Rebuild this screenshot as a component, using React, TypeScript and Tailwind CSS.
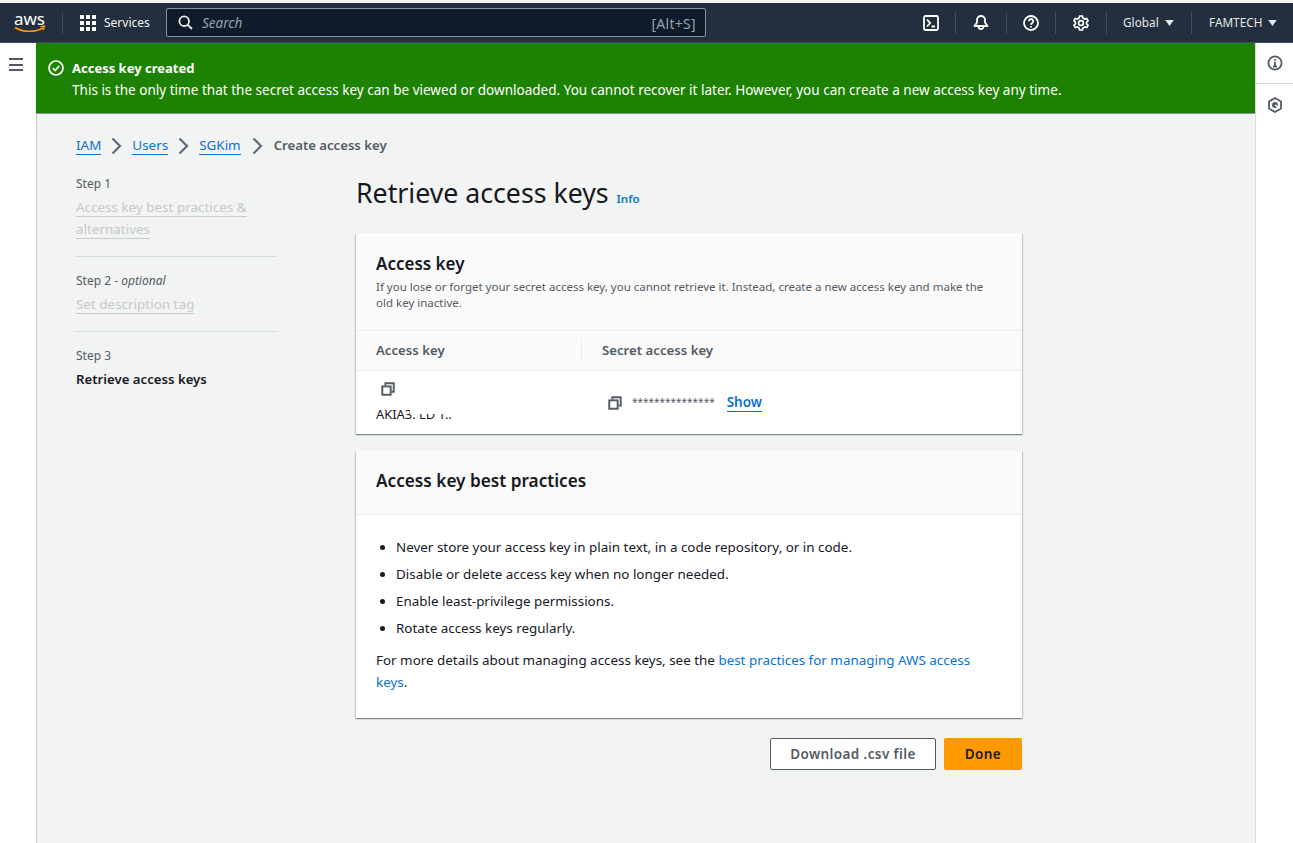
import React from "react";

const F = "font-['Noto_Sans','Open_Sans',sans-serif]";

function Copy() {
  return (
    <svg width="16" height="16" viewBox="0 0 16 16" fill="none" stroke="#545b64" strokeWidth="2.2">
      <rect x="1.5" y="5" width="9.5" height="9.5" />
      <path d="M5 4V1.5h9.5V11H12" />
    </svg>
  );
}

function Caret() {
  return (
    <svg width="9" height="6" viewBox="0 0 10 7" fill="#e5e7eb">
      <path d="M0 0h10L5 7z" />
    </svg>
  );
}

function Sep() {
  return <div className="w-px h-[22px] bg-[#414d5c]" />;
}

function Chevron() {
  return (
    <svg width="11" height="18" viewBox="0 0 11 18" fill="none" stroke="#5f6b7a" strokeWidth="2.2">
      <path d="M1.5 1.5L9 9l-7.5 7.5" />
    </svg>
  );
}

function Crumb({ children }: { children: React.ReactNode }) {
  return <span className="text-[#0972d3] border-b border-[#0972d3] leading-[17px]">{children}</span>;
}

export default function App() {
  return (
    <div className={`${F} w-[1293px] h-[843px] overflow-hidden bg-white flex flex-col text-[14px] text-[#16191f]`}>
      <div className="h-[3px] bg-[#f4f4f4]" />
      <header className="h-[40px] bg-[#232f3e] border-b border-[#414d5c] flex items-center text-white shrink-0">
        <div className="w-[62px] pl-[14px] flex items-center">
          <svg width="33" height="22" viewBox="0 0 33 22">
            <text x="0" y="12.5" fill="#fff" fontSize="17" fontFamily="Noto Sans, sans-serif" textLength="31">aws</text>
            <path d="M1 15.5c8 5 20 5 28 .5" fill="none" stroke="#ff9900" strokeWidth="1.6" />
            <path d="M26.5 14.7l4-.6-1.2 4" fill="none" stroke="#ff9900" strokeWidth="1.4" />
          </svg>
        </div>
        <Sep />
        <div className="flex items-center ml-[17px] w-[86px] gap-[8px]">
          <div className="grid grid-cols-3 gap-[2px] w-[16px]">
            {Array.from({ length: 9 }).map((_, i) => (
              <div key={i} className="w-[4px] h-[4px] bg-white" />
            ))}
          </div>
          <span className="text-[12px] text-[#f2f3f3] pt-px">Services</span>
        </div>
        <div className="w-[540px] h-[29px] bg-[#0f1b2a] border border-[#879596] rounded-[2px] flex items-center pl-[11px] pr-[9px]">
          <svg width="15" height="15" viewBox="0 0 15 15" fill="none" stroke="#e9ebed" strokeWidth="1.8">
            <circle cx="6.2" cy="6.2" r="4.8" />
            <path d="M9.8 9.8l4.2 4.2" />
          </svg>
          <span className="ml-[9px] italic text-[#95a5a6] text-[13.5px] pt-px">Search</span>
          <span className="ml-auto text-[#95a5a6] text-[14px] tracking-[0.3px] pt-px">[Alt+S]</span>
        </div>
        <div className="ml-[217px] w-[16px] flex justify-center">
          <svg width="16" height="16" viewBox="0 0 16 16" fill="none" stroke="#fff" strokeWidth="1.8">
            <rect x="1" y="1" width="14" height="14" rx="1.5" />
            <path d="M4 4.5L7.2 8 4 11.5M8.5 11.5H12" />
          </svg>
        </div>
        <div className="ml-[16px]"><Sep /></div>
        <div className="ml-[17px] w-[16px] flex justify-center">
          <svg width="16" height="17" viewBox="0 0 16 17" fill="none" stroke="#fff" strokeWidth="1.8">
            <path d="M1.5 12h13L12 8.5V6a4 4 0 0 0-8 0v2.5z" strokeLinejoin="round" />
            <path d="M5.5 12.5a2.5 2.5 0 0 0 5 0" />
          </svg>
        </div>
        <div className="ml-[17px]"><Sep /></div>
        <div className="ml-[16px] w-[16px] flex justify-center">
          <svg width="16" height="16" viewBox="0 0 16 16" fill="none" stroke="#fff" strokeWidth="1.8">
            <circle cx="8" cy="8" r="7" />
            <path d="M5.8 6.2a2.2 2.2 0 1 1 3.3 1.9C8.4 8.5 8 9 8 9.8" />
            <path d="M8 11v1.4" />
          </svg>
        </div>
        <div className="ml-[16px]"><Sep /></div>
        <div className="ml-[17px] w-[16px] flex justify-center">
          <svg width="16" height="16" viewBox="0 0 16 16" fill="none" stroke="#fff" strokeWidth="1.7">
            <circle cx="8" cy="8" r="2.4" />
            <path d="M6.6 1h2.8l.5 2 1.8 1 2-.6 1.4 2.4-1.5 1.4v1.6l1.5 1.4-1.4 2.4-2-.6-1.8 1-.5 2H6.6l-.5-2-1.8-1-2 .6L.9 10.2l1.5-1.4V7.2L.9 5.8l1.4-2.4 2 .6 1.8-1z" />
          </svg>
        </div>
        <div className="ml-[17px]"><Sep /></div>
        <div className="ml-[16px] flex items-center gap-[6px] text-[11.8px] text-[#e5e7eb] w-[68px] pt-px">
          Global <Caret />
        </div>
        <Sep />
        <div className="ml-[17px] flex items-center gap-[6px] text-[11.8px] text-[#e5e7eb] pt-px">
          FAMTECH <Caret />
        </div>
      </header>

      <div className="flex flex-1 min-h-0">
        <aside className="w-[36px] bg-white pt-[15px] pl-[9px] shrink-0">
          <div className="flex flex-col gap-[3.5px] w-[14px]">
            <div className="h-[2px] bg-[#545b64]" />
            <div className="h-[2px] bg-[#545b64]" />
            <div className="h-[2px] bg-[#545b64]" />
          </div>
        </aside>

        <main className="flex-1 min-w-0 bg-[#f2f3f3] border-l border-[#c8cccc]">
          <div className="h-[71px] -ml-px bg-[#1d8102] text-white border-b border-[#879596] pl-[12px] pt-[14px] flex gap-[8px]">
            <svg className="mt-[3px] shrink-0" width="16" height="16" viewBox="0 0 16 16" fill="none" stroke="#fff" strokeWidth="1.7">
              <circle cx="8" cy="8" r="7" />
              <path d="M4.8 8.2l2.3 2.3 4.2-4.7" />
            </svg>
            <div className="leading-[22px]">
              <div className="font-bold text-[13px]">Access key created</div>
              <div className="text-[13.54px]">This is the only time that the secret access key can be viewed or downloaded. You cannot recover it later. However, you can create a new access key any time.</div>
            </div>
          </div>

          <div className="pl-[39px] pt-[22px]">
            <nav className="flex items-center text-[13.45px] h-[20px]">
              <Crumb>IAM</Crumb>
              <span className="mx-[10px]"><Chevron /></span>
              <Crumb>Users</Crumb>
              <span className="mx-[10px]"><Chevron /></span>
              <Crumb>SGKim</Crumb>
              <span className="mx-[11px]"><Chevron /></span>
              <span className="font-semibold text-[13.15px] text-[#545b64]">Create access key</span>
            </nav>

            <div className="flex mt-[18px]">
              <div className="w-[200px] shrink-0 text-[13.45px]">
                <div className="text-[12px] text-[#545b64] leading-[20px]">Step 1</div>
                <div className="mt-[2px] leading-[22px] text-[#c6caca]">
                  <span className="border-b border-[#c6caca]">Access key best practices &amp;</span>
                  <br />
                  <span className="border-b border-[#c6caca]">alternatives</span>
                </div>
                <div className="h-px bg-[#d5dbdb] mt-[16px] mb-[14px]" />
                <div className="text-[12px] text-[#545b64] leading-[20px]">
                  Step 2 - <i>optional</i>
                </div>
                <div className="mt-[2px] leading-[22px] text-[#c6caca]">
                  <span className="border-b border-[#c6caca]">Set description tag</span>
                </div>
                <div className="h-px bg-[#d5dbdb] mt-[16px] mb-[14px]" />
                <div className="text-[12px] text-[#545b64] leading-[20px]">Step 3</div>
                <div className="mt-[2px] leading-[22px] text-[13.2px] font-semibold">Retrieve access keys</div>
              </div>

              <div className="ml-[80px] w-[666px] shrink-0">
                <div className="flex items-baseline h-[40px]">
                  <h1 className="text-[26.7px] leading-[38px] text-[#16191f]">Retrieve access keys</h1>
                  <span className="ml-[8px] text-[11.5px] font-semibold text-[#0972d3]">Info</span>
                </div>

                <section className="mt-[19px] bg-white shadow-[0_1px_1px_0_rgba(0,28,36,0.3),1px_1px_1px_0_rgba(0,28,36,0.15),-1px_1px_1px_0_rgba(0,28,36,0.15)]">
                  <div className="h-[98px] bg-[#fafafa] border-b border-[#eaeded] px-[20px] pt-[19px]">
                    <h2 className="text-[17px] font-semibold leading-[24px]">Access key</h2>
                    <p className="text-[11.5px] leading-[16px] text-[#545b64] mt-[3px]">
                      If you lose or forget your secret access key, you cannot retrieve it. Instead, create a new access key and make the
                      <br />
                      old key inactive.
                    </p>
                  </div>
                  <div className="h-[40px] bg-[#fafafa] border-b border-[#eaeded] flex items-center text-[#545b64] font-semibold text-[13.2px]">
                    <div className="w-[226px] pl-[20px] border-r border-[#eaeded] h-[22px] flex items-center">Access key</div>
                    <div className="pl-[20px]">Secret access key</div>
                  </div>
                  <div className="h-[63px] flex">
                    <div className="w-[226px] pl-[20px] pt-[11px]">
                      <div className="pl-[5px]">
                        <span className="block scale-[0.88] origin-top-left"><Copy /></span>
                      </div>
                      <div className="relative mt-[9px] h-[12px] overflow-hidden text-[12.9px] leading-[14px] whitespace-nowrap">
                        AKIA3. LD T..
                        <div className="absolute left-[34px] top-0 w-[50px] h-[7px] bg-white" />
                      </div>
                    </div>
                    <div className="flex items-center pl-[25px]">
                      <span className="block scale-[0.88]"><Copy /></span>
                      <span className="ml-[9px] text-[10px] text-[#545b64]">***************</span>
                      <span className="ml-[12px] font-semibold text-[13.5px] text-[#0972d3] border-b border-[#0972d3] leading-[17px]">Show</span>
                    </div>
                  </div>
                </section>

                <section className="mt-[17px] bg-white shadow-[0_1px_1px_0_rgba(0,28,36,0.3),1px_1px_1px_0_rgba(0,28,36,0.15),-1px_1px_1px_0_rgba(0,28,36,0.15)]">
                  <div className="h-[64px] bg-[#fafafa] border-b border-[#eaeded] px-[20px] pb-[3px] flex items-center">
                    <h2 className="text-[17.2px] font-semibold">Access key best practices</h2>
                  </div>
                  <div className="px-[20px] pt-[21px] h-[203px] text-[13.42px]">
                    <ul className="list-disc pl-[20px] leading-[22px] flex flex-col gap-[5px]">
                      <li>Never store your access key in plain text, in a code repository, or in code.</li>
                      <li>Disable or delete access key when no longer needed.</li>
                      <li>Enable least-privilege permissions.</li>
                      <li>Rotate access keys regularly.</li>
                    </ul>
                    <p className="mt-[10px] leading-[22px]">
                      For more details about managing access keys, see the <span className="text-[#0972d3]">best practices for managing AWS access keys</span>.
                    </p>
                  </div>
                </section>

                <div className="flex justify-end gap-[8px] mt-[20px]">
                  <div className="w-[166px] h-[32px] bg-white border border-[#545b64] rounded-[2px] flex items-center justify-center font-semibold text-[13.5px] tracking-[0.4px] text-[#545b64]">
                    Download .csv file
                  </div>
                  <div className="w-[78px] h-[32px] bg-[#ff9900] rounded-[2px] flex items-center justify-center font-semibold text-[13.5px] tracking-[0.4px] text-[#16191f]">
                    Done
                  </div>
                </div>
              </div>
            </div>
          </div>
        </main>

        <aside className="w-[38px] bg-white border-l border-[#d5dbdb] shrink-0">
          <div className="h-[41px] border-b border-[#d5dbdb] flex items-center justify-center">
            <svg width="16" height="16" viewBox="0 0 16 16" fill="none" stroke="#545b64" strokeWidth="1.8">
              <circle cx="8" cy="8" r="6.6" />
              <path d="M8 7v4.5M6 11.5h4M8 4v1.8" />
            </svg>
          </div>
          <div className="h-[42px] flex items-center justify-center">
            <svg width="16" height="16" viewBox="0 0 16 16" fill="none" stroke="#545b64" strokeWidth="1.8">
              <path d="M8 1l6 3.5v7L8 15l-6-3.5v-7z" strokeLinejoin="round" />
              <circle cx="8" cy="8" r="3" fill="#545b64" stroke="none" />
              <path d="M8 8l3.5 2.2" stroke="#fff" strokeWidth="1.4" />
            </svg>
          </div>
        </aside>
      </div>
    </div>
  );
}
